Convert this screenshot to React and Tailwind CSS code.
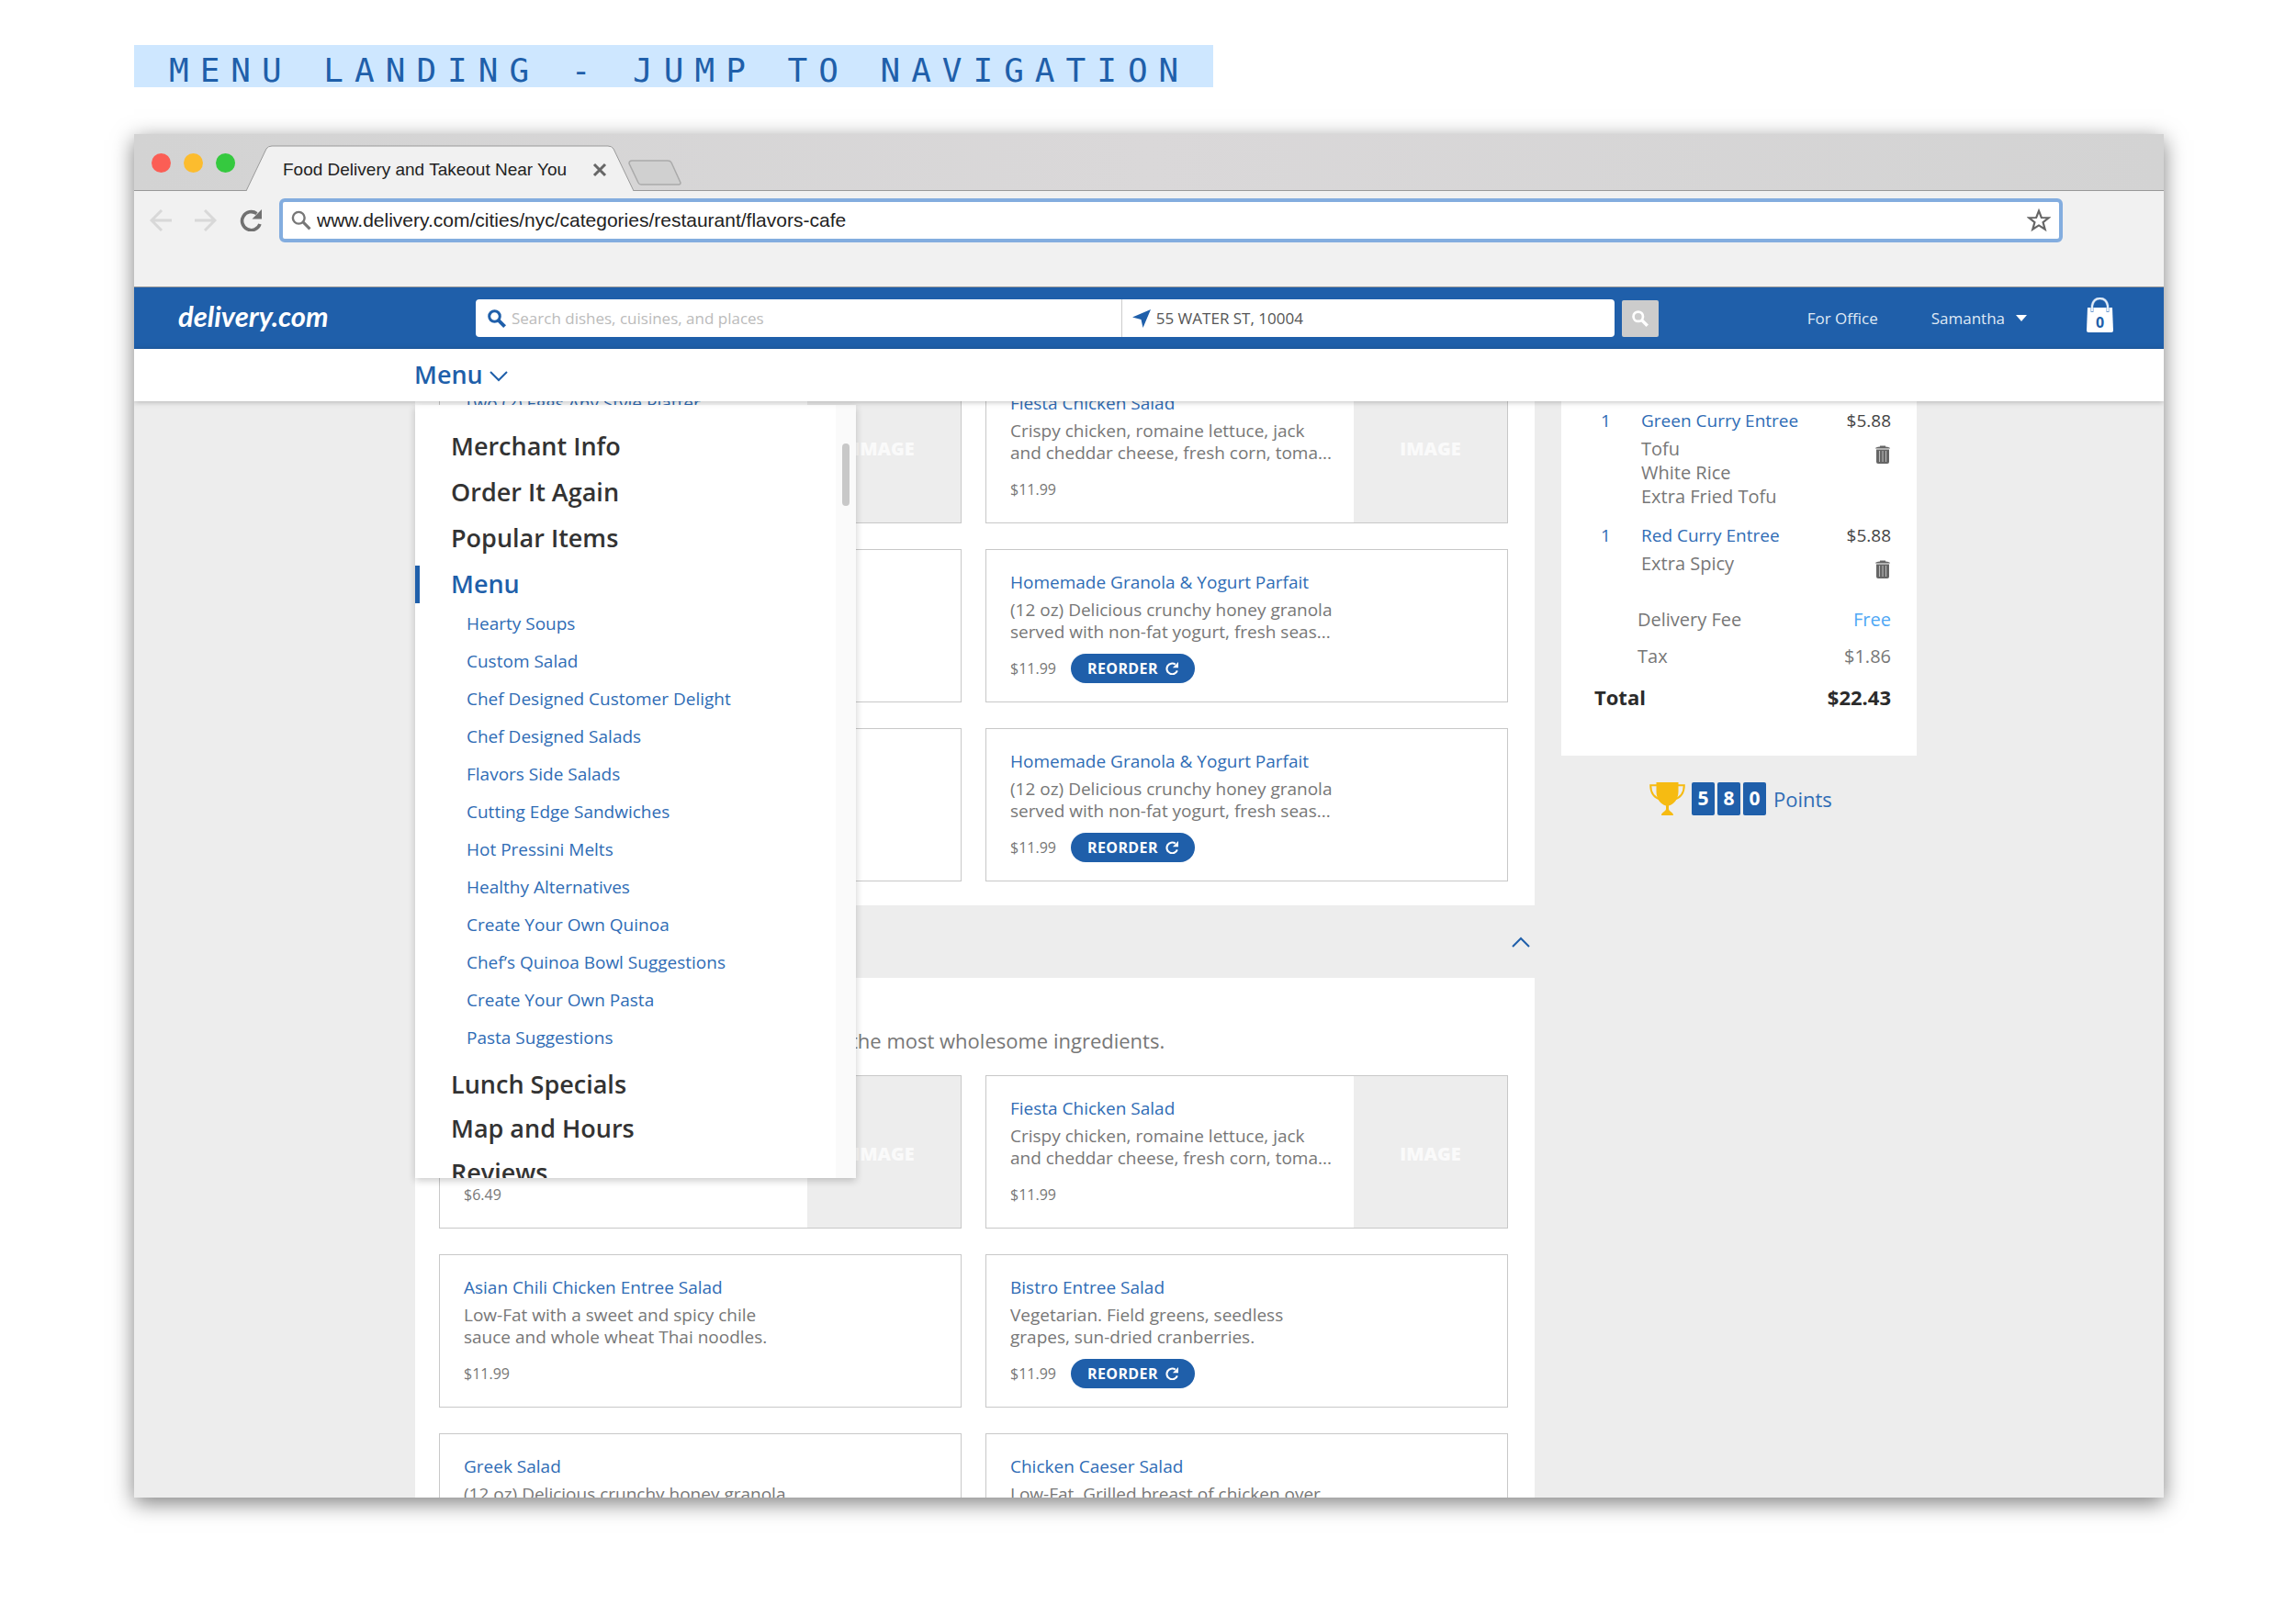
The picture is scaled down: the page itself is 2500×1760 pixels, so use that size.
import React, { useState } from "react";

const PARFAIT = {
  name: "Homemade Granola & Yogurt Parfait",
  text: "(12 oz) Delicious crunchy honey granola served with non-fat yogurt, fresh seas...",
  price: "$11.99",
  reorder: true,
};

const FIESTA = {
  name: "Fiesta Chicken Salad",
  text: "Crispy chicken, romaine lettuce, jack and cheddar cheese, fresh corn, toma...",
  price: "$11.99",
  image: true,
};

const breakfast = [
  {
    name: "Two (2) Eggs Any Style Platter",
    text: "",
    price: "",
    image: true,
  },
  FIESTA,
  { name: "", text: "", price: "" },
  PARFAIT,
  { name: "", text: "", price: "" },
  PARFAIT,
];

const salads = [
  {
    name: "",
    text: "",
    price: "$6.49",
    image: true,
  },
  FIESTA,
  {
    name: "Asian Chili Chicken Entree Salad",
    text: "Low-Fat with a sweet and spicy chile sauce and whole wheat Thai noodles.",
    price: "$11.99",
  },
  {
    name: "Bistro Entree Salad",
    text: "Vegetarian. Field greens, seedless grapes, sun-dried cranberries.",
    price: "$11.99",
    reorder: true,
  },
  {
    name: "Greek Salad",
    text: "(12 oz) Delicious crunchy honey granola",
    price: "",
  },
  {
    name: "Chicken Caeser Salad",
    text: "Low-Fat. Grilled breast of chicken over",
    price: "",
  },
];

const topLinks = ["Merchant Info", "Order It Again", "Popular Items", "Menu"];

const menuLinks = [
  "Hearty Soups",
  "Custom Salad",
  "Chef Designed Customer Delight",
  "Chef Designed Salads",
  "Flavors Side Salads",
  "Cutting Edge Sandwiches",
  "Hot Pressini Melts",
  "Healthy Alternatives",
  "Create Your Own Quinoa",
  "Chef’s Quinoa Bowl Suggestions",
  "Create Your Own Pasta",
  "Pasta Suggestions",
];

const bottomLinks = ["Lunch Specials", "Map and Hours", "Reviews"];

const cart = [
  { qty: 1, name: "Green Curry Entree", price: "$5.88", options: ["Tofu", "White Rice", "Extra Fried Tofu"] },
  { qty: 1, name: "Red Curry Entree", price: "$5.88", options: ["Extra Spicy"] },
];

// ================= ICONS =================
function SearchIcon({ className, width = 2 }) {
  return (
    <svg viewBox="0 0 20 20" className={className} fill="none" stroke="currentColor" strokeWidth={width}>
      <circle cx="7.5" cy="7.5" r="5.8" />
      <path d="M11.8 11.8 L18.6 18.6" strokeWidth={width * 1.3} />
    </svg>
  );
}

function ReloadIcon({ className }) {
  return (
    <svg viewBox="0 0 24 24" className={className} fill="none" stroke="currentColor" strokeWidth="3.6">
      <path d="M22 16 A10 10 0 1 1 18.5 4.6" />
      <path d="M24 0 V10.5 H13.5 Z" fill="currentColor" stroke="none" />
    </svg>
  );
}

function Chevron({ className, up }) {
  return (
    <svg viewBox="0 0 20 12" className={className} fill="none" stroke="currentColor" strokeWidth="2">
      <path d={up ? "M1 11 L10 2 L19 11" : "M1 1 L10 10 L19 1"} />
    </svg>
  );
}

function TrashIcon() {
  return (
    <svg viewBox="0 0 16 20" className="h-5 w-4" fill="#666">
      <path d="M0 3.6 Q0 1.6 5 1.4 V0.4 H11 V1.4 Q16 1.6 16 3.6 Z" />
      <path d="M1 4.6 H15 V18 Q15 20 13 20 H3 Q1 20 1 18 Z" />
      <path d="M4.5 6 V18 M8 6 V18 M11.5 6 V18" stroke="#bbb" strokeWidth="1" />
    </svg>
  );
}

function TrophyIcon() {
  return (
    <svg viewBox="0 0 39 36" className="h-9 w-[39px]">
      <path
        d="M8 3.2 H1.2 C1.2 12 5 17 13 19 M31 3.2 H37.8 C37.8 12 34 17 26 19"
        fill="none"
        stroke="#f6bb12"
        strokeWidth="2"
      />
      <path
        d="M7.500 0 H31.500 V10 C31.500 18 27 24 21 25.500 V29 C21 32 26 32.500 26 36 H13 C13 32.500 18 32 18 29 V25.500 C12 24 7.500 18 7.500 10 Z"
        fill="#f6bb12"
      />
    </svg>
  );
}

// ================= BROWSER =================
function BrowserBar() {
  return (
    <div className="shrink-0 bg-[#f1f1f1] font-['Liberation_Sans',Arial,sans-serif]">
      <div className="relative flex h-[62px] items-end bg-linear-to-r from-[#d3d3d3] via-[#dad8d9] to-[#d3d3d3]">
        <div className="absolute inset-x-0 bottom-0 h-px bg-[#999]" />
        <div className="flex h-full w-[122px] items-center gap-[14px] pl-[19px]">
          <span className="size-[21px] rounded-full bg-[#fb5e55]" />
          <span className="size-[21px] rounded-full bg-[#fcbc2e]" />
          <span className="size-[21px] rounded-full bg-[#35c93f]" />
        </div>
        <div className="relative flex h-[50px] w-[422px] items-center">
          <svg viewBox="0 0 422 50" className="absolute inset-0 size-full" preserveAspectRatio="none">
            <path d="M0 50 L22 4 Q24 1 28 1 H394 Q398 1 400 4 L422 50" fill="#f1f1f1" stroke="#999" />
          </svg>
          <span className="relative pt-1 pl-[40px] text-[19px] whitespace-nowrap text-[#222]">
            Food Delivery and Takeout Near You
          </span>
          <button aria-label="Close tab" className="relative mt-1 mr-[29px] ml-auto text-[#666]">
            <svg viewBox="0 0 16 16" className="size-4" stroke="currentColor" strokeWidth="3">
              <path d="M2 2 L14 14 M14 2 L2 14" />
            </svg>
          </button>
        </div>
        <button aria-label="New tab" className="mb-[6px] -ml-[6px]">
          <svg viewBox="0 0 58 28" className="h-7 w-[58px]" fill="#d0d0d0" stroke="#aaa" strokeWidth="1.5">
            <path d="M4 1 H43 Q46 1 47 3 L57 25 Q57 27 55 27 H14 Q12 27 11 25 L1 4 Q1 1 4 1 Z" />
          </svg>
        </button>
      </div>

      <div className="flex items-center gap-[25px] pt-2 pr-[110px] pb-12 pl-[17px]">
        <button aria-label="Back" className="text-[#d8d8d8]">
          <svg viewBox="0 0 24 24" className="size-6" fill="none" stroke="currentColor" strokeWidth="3">
            <path d="M24 12 H2 M13 1 L2 12 L13 23" />
          </svg>
        </button>
        <button aria-label="Forward" className="text-[#d8d8d8]">
          <svg viewBox="0 0 24 24" className="size-6" fill="none" stroke="currentColor" strokeWidth="3">
            <path d="M0 12 H22 M11 1 L22 12 L11 23" />
          </svg>
        </button>
        <button aria-label="Reload" className="text-[#707070]">
          <ReloadIcon className="size-6" />
        </button>
        <label className="-ml-[6px] flex h-12 flex-1 items-center rounded-md border-4 border-[#83addf] bg-white px-[9px]">
          <SearchIcon className="size-[22px] text-[#777]" width={2.2} />
          <input
            aria-label="Address"
            defaultValue="www.delivery.com/cities/nyc/categories/restaurant/flavors-cafe"
            className="ml-[6px] flex-1 text-[21px] text-[#222] outline-none"
          />
          <svg viewBox="0 0 24 24" className="size-[26px]" fill="none" stroke="#666" strokeWidth="2">
            <path d="M12 2.5 L14.6 9.2 L21.8 9.5 L16.2 14 L18.2 21 L12 17 L5.8 21 L7.8 14 L2.2 9.5 L9.4 9.2 Z" />
          </svg>
        </label>
      </div>
    </div>
  );
}

// ================= SITE HEADER =================
function Header() {
  return (
    <header className="flex h-[68px] shrink-0 items-center border-t border-[#999] bg-[#1f5faa] pr-[55px] pl-12">
      <a href="#home" className="w-[324px] pb-1 font-['Lato',sans-serif] text-[31px] leading-none font-bold text-white italic">
        delivery.com
      </a>
      <form className="flex flex-1 items-center gap-2" onSubmit={(e) => e.preventDefault()}>
        <div className="flex h-[41px] flex-1 rounded-sm bg-white">
          <label className="flex flex-[703] items-center border-r border-[#ccc] pl-[13px]">
            <SearchIcon className="size-5 text-[#1f5faa]" width={3} />
            <input
              aria-label="Search"
              placeholder="Search dishes, cuisines, and places"
              className="ml-[6px] flex-1 text-[17px] outline-none placeholder:text-[#bbb]"
            />
          </label>
          <label className="flex flex-[535] items-center pl-[11px]">
            <svg viewBox="0 0 20 20" className="size-5" fill="#1f5faa">
              <path d="M20 0 L11.5 20 L9.5 11 L0 8.5 Z" />
            </svg>
            <input
              aria-label="Delivery address"
              defaultValue="55 WATER ST, 10004"
              className="ml-[6px] w-0 flex-1 text-[17px] text-[#555] outline-none"
            />
          </label>
        </div>
        <button aria-label="Search" className="flex size-10 items-center justify-center rounded-xs bg-[#ccc] text-white">
          <SearchIcon className="size-[18px]" width={3} />
        </button>
      </form>
      <nav className="ml-[162px] flex items-center text-[17px] text-[#dfe9f5]">
        <a href="#office">For Office</a>
        <button className="ml-[58px] flex items-center gap-3">
          Samantha
          <svg viewBox="0 0 12 8" className="h-2 w-3" fill="#fff">
            <path d="M0 0 H12 L6 7 Z" />
          </svg>
        </button>
        <button aria-label="Bag, 0 items" className="relative mb-2 ml-[65px] h-[38px] w-[29px]">
          <svg viewBox="0 0 29 38" className="absolute inset-0 size-full">
            <path d="M1 11 H28 L29 36 Q29 38 27 38 H2 Q0 38 0 36 Z" fill="#fff" />
            <path d="M6 16 V9 Q7.5 1 14.5 1 Q21.5 1 23 9 V16" fill="none" stroke="#6f9bd0" strokeWidth="3" />
            <path d="M6 15 V9 Q7.5 1 14.5 1 Q21.5 1 23 9 V15" fill="none" stroke="#e4edf7" strokeWidth="2" />
          </svg>
          <span className="relative block pt-4 text-center text-[16px] leading-5 font-bold text-[#1f5faa]">0</span>
        </button>
      </nav>
    </header>
  );
}

// ================= JUMP MENU =================
function JumpLink({ label, active }) {
  return (
    <li className={`flex h-[50px] items-center ${active ? "text-[#1f5faa]" : "text-[#333]"}`}>
      <span className={`h-[41px] w-[5px] ${active ? "bg-[#1f5faa]" : ""}`} />
      <a href="#jump" className="pl-[34px] text-[27px] font-semibold">
        {label}
      </a>
    </li>
  );
}

function JumpMenu() {
  return (
    <div className="absolute top-1 left-[306px] flex h-[842px] w-[480px] overflow-hidden bg-white shadow-[0_3px_8px_rgba(0,0,0,0.2)]">
      <ul className="flex-1 pt-5">
        {topLinks.map((label) => (
          <JumpLink key={label} label={label} active={label === "Menu"} />
        ))}
        <li className="pb-[3px]">
          <ul className="pl-14">
            {menuLinks.map((label) => (
              <li key={label} className="h-[41px] leading-[36px]">
                <a href="#category" className="text-[19px] text-[#2f6cb5]">
                  {label}
                </a>
              </li>
            ))}
          </ul>
        </li>
        <li>
          <ul className="-space-y-[2px]">
            {bottomLinks.map((label) => (
              <JumpLink key={label} label={label} />
            ))}
          </ul>
        </li>
      </ul>
      <div className="w-[22px] bg-[#fafafa] pt-[42px]">
        <div className="mx-auto h-[68px] w-2 rounded-full bg-[#c8c8c8]" />
      </div>
    </div>
  );
}

// ================= MENU CARDS =================
function Card({ item }) {
  return (
    <article className="flex h-[167px] overflow-hidden border border-[#c8c8c8] bg-white">
      <div className="flex-1 pt-[21px] pl-[26px]">
        <h3 className="h-7 text-[19px] leading-7">
          <a href="#item" className="text-[#2f6cb5]">
            {item.name}
          </a>
        </h3>
        <p className="mt-1 h-12 max-w-[356px] text-[19px] leading-6 text-[#777]">{item.text}</p>
        <div className="mt-3 flex h-8 items-center">
          <span className="text-[16px] text-[#777]">{item.price}</span>
          {item.reorder && (
            <button className="ml-4 flex h-8 w-[135px] items-center justify-center gap-2 rounded-full bg-[#1f5faa] text-[16px] font-bold tracking-wide text-white">
              REORDER
              <ReloadIcon className="size-[14px]" />
            </button>
          )}
        </div>
      </div>
      {item.image && (
        <div className="flex w-[167px] items-center justify-center bg-[#ededed] pt-1 text-[20px] font-extrabold text-[#fafafa]">
          IMAGE
        </div>
      )}
    </article>
  );
}

function CardGrid({ items }) {
  return (
    <div className="grid grid-cols-2 gap-x-[26px] gap-y-7 pr-[29px] pl-[26px]">
      {items.map((item, i) => (
        <Card key={i} item={item} />
      ))}
    </div>
  );
}

// ================= CART =================
function Cart() {
  return (
    <aside className="ml-[29px] w-[387px] shrink-0">
      <div className="bg-white pt-[7px] pr-7 pb-10 pl-9">
        {cart.map((line) => (
          <div key={line.name} className="flex pb-[15px]">
            <span className="w-[51px] pl-[7px] text-[19px] leading-7 text-[#2f6cb5]">{line.qty}</span>
            <div className="flex-1">
              <a href="#line" className="block text-[19px] leading-7 text-[#2f6cb5]">
                {line.name}
              </a>
              <ul className="mt-1 text-[20px] leading-[26px] text-[#777]">
                {line.options.map((o) => (
                  <li key={o}>{o}</li>
                ))}
              </ul>
            </div>
            <div className="flex flex-col items-end text-[19px] leading-7 text-[#444]">
              {line.price}
              <button aria-label={`Remove ${line.name}`} className="mt-[13px] mr-px">
                <TrashIcon />
              </button>
            </div>
          </div>
        ))}
        <dl className="pt-[10px] text-[20px] text-[#777]">
          <div className="flex h-10 items-center justify-between pl-[47px]">
            <dt>Delivery Fee</dt>
            <dd className="text-[#4fa8f5]">Free</dd>
          </div>
          <div className="flex h-10 items-center justify-between pl-[47px]">
            <dt>Tax</dt>
            <dd>$1.86</dd>
          </div>
          <div className="flex h-12 items-center justify-between text-[22px] font-bold text-[#2b2b2b]">
            <dt>Total</dt>
            <dd>$22.43</dd>
          </div>
        </dl>
      </div>
      <div className="mt-[29px] flex h-9 items-center pl-24">
        <TrophyIcon />
        <div className="ml-[7px] flex gap-[3px] text-[21px] font-bold text-white">
          {["5", "8", "0"].map((d) => (
            <span key={d} className="flex h-9 w-[25px] items-center justify-center rounded-xs bg-[#1f5faa]">
              {d}
            </span>
          ))}
        </div>
        <span className="ml-2 text-[22px] text-[#2f6cb5]">Points</span>
      </div>
    </aside>
  );
}

export default function App() {
  const [menuOpen, setMenuOpen] = useState(true);
  const [saladsOpen, setSaladsOpen] = useState(true);

  return (
    <div className="flex h-screen flex-col bg-white pt-[49px] pr-[144px] pb-[129px] pl-[146px] font-['Open_Sans',sans-serif]">
      <h1 className="mb-[51px] flex h-[46px] shrink-0 items-center self-start bg-[#cee7ff] pt-[10px] pr-[26px] pl-[38px] font-['DejaVu_Sans_Mono',monospace] text-[36px] leading-none tracking-[12px] whitespace-nowrap text-[#1f5faa]">
        MENU LANDING - JUMP TO NAVIGATION
      </h1>

      <div className="flex min-h-0 flex-1 flex-col overflow-hidden bg-[#ededed] shadow-[0_6px_22px_rgba(0,0,0,0.5)]">
        <BrowserBar />
        <Header />

        <div className="relative z-10 flex h-[57px] shrink-0 items-center bg-white pl-[305px] shadow-[0_1px_6px_rgba(0,0,0,0.25)]">
          <button
            onClick={() => setMenuOpen(!menuOpen)}
            className="flex items-center gap-[7px] text-[27px] font-semibold text-[#1f5faa]"
          >
            Menu
            <Chevron className="mt-[2px] h-3 w-5" />
          </button>
        </div>

        <div className="relative flex min-h-0 flex-1 items-start overflow-hidden pr-[269px] pl-[306px]">
          <main className="-mt-[34px] flex-1">
            <section className="bg-white pb-[26px]">
              <CardGrid items={breakfast} />
            </section>
            <div className="flex h-[79px] items-center justify-end pr-[5px]">
              <button
                aria-label="Toggle salads"
                onClick={() => setSaladsOpen(!saladsOpen)}
                className="text-[#1f5faa]"
              >
                <Chevron className="h-3 w-5" up />
              </button>
            </div>
            {saladsOpen && (
              <section className="bg-white pb-[26px]">
                <p className="pt-[52px] pb-[22px] pl-[53px] text-[22px] leading-8 text-[#777]">
                  Our salads are tossed to order daily with the most wholesome ingredients.
                </p>
                <CardGrid items={salads} />
              </section>
            )}
          </main>
          <Cart />
          {menuOpen && <JumpMenu />}
        </div>
      </div>
    </div>
  );
}
